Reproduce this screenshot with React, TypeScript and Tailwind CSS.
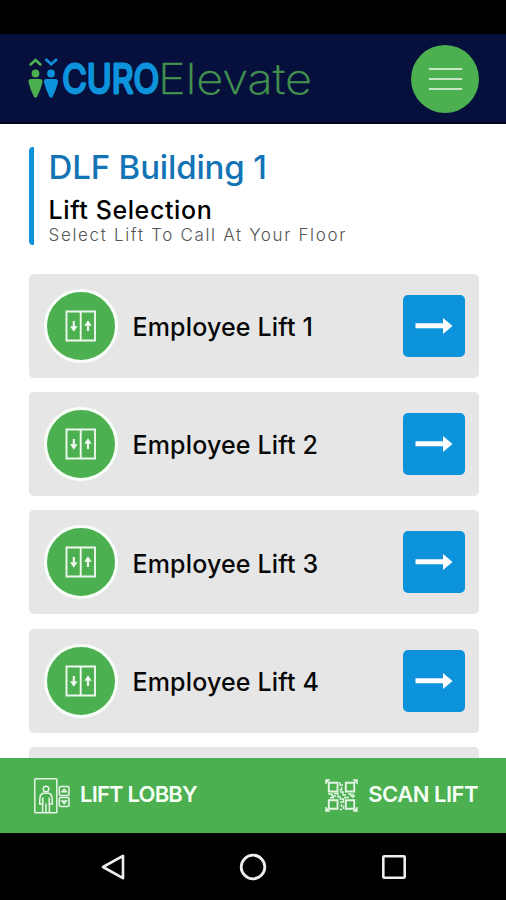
const lifts = [1, 2, 3, 4];

const Logo = () => {
  return (
    <svg width="288" height="60" viewBox="26 50 288 60" fill="none" aria-label="CURO Elevate">
      <path d="M29.8 66.3 35.5 61 41.2 66.3" stroke="#4caf50" strokeWidth="2.6" />
      <path d="M45.5 60 51.2 65.2 57 60" stroke="#0d93db" strokeWidth="2.6" />
      <circle cx="35.5" cy="74.5" r="3.9" fill="#4caf50" />
      <circle cx="51" cy="74.5" r="3.9" fill="#0d93db" />
      <path d="M31 80H40Q43 80 42.4 83.5 41 90 37.2 97.5 35.5 100 33.8 97.5 30 90 28.6 83.5 28 80 31 80Z" fill="#4caf50" />
      <path d="M46.5 80H55.5Q58.5 80 57.9 83.5 56.5 90 52.7 97.5 51 100 49.3 97.5 45.5 90 44.1 83.5 43.5 80 46.5 80Z" fill="#0d93db" />
      <text
        transform="translate(62.3 94.3) scale(0.84 1)"
        fill="#0d93db"
        stroke="#0d93db"
        strokeWidth="2.8"
        strokeLinejoin="round"
        className="font-['Inter',sans-serif] text-[40px] font-normal"
      >
        CURO
      </text>
      <text
        x="158"
        y="95.3"
        textLength="154"
        lengthAdjust="spacingAndGlyphs"
        fill="#43924f"
        stroke="#43924f"
        strokeWidth="0.4"
        className="font-['Inter',sans-serif] text-[42px] font-extralight"
      >
        Elevate
      </text>
    </svg>
  );
};

const LiftIcon = () => {
  return (
    <svg width="32" height="32" viewBox="0 0 32 32" fill="none" stroke="#fff" className="opacity-90">
      <path d="M1.5 1.5H30V30.5H1.5ZM15.7 1.5V30.5" strokeWidth="1.9" />
      <path d="M8.8 11V19M23 21V14" strokeWidth="2.2" />
      <path d="M5 16.3H12.6L8.8 21.7ZM19.2 15.7H26.8L23 10.3Z" fill="#fff" stroke="none" />
    </svg>
  );
};

const LobbyIcon = () => {
  return (
    <svg width="36" height="36" viewBox="0 0 36 36" fill="none" stroke="#e4f5e5" strokeWidth="1.5">
      <rect x="0.8" y="0.8" width="22" height="34" rx="0.8" />
      <circle cx="12" cy="11" r="2.8" />
      <path d="M9.3 15.3H14.7Q17.6 16 18 19.5L18.4 26H15.4V34.5M9.3 15.3Q6.4 16 6 19.5L5.6 26H8.6V34.5M8.8 19.5V27M15.2 19.5V27M12 25.5V34.5" />
      <rect x="25.3" y="8.5" width="9.7" height="9" rx="1.3" />
      <rect x="25.3" y="19.5" width="9.7" height="9" rx="1.3" />
      <path d="M28 13.8 30.2 11.3 32.4 13.8ZM28 23H32.4L30.2 25.6Z" />
    </svg>
  );
};

const ScanIcon = () => {
  return (
    <svg width="33" height="33" viewBox="0 0 33 33" fill="none" stroke="#e4f5e5" strokeWidth="1.5">
      <path d="M1 5V1H5M28 1H32V5M32 28V32H28M5 32H1V28M1 1 3.5 3.5M32 1 29.5 3.5M32 32 29.5 29.5M1 32 3.5 29.5" />
      <path d="M3.8 3.8H12.5V12.5H3.8ZM20.8 3.8H29.2V12.5H20.8ZM3.8 21.2H12.5V29.8H3.8ZM20.8 21.2H29.2V29.8H20.8Z" strokeWidth="1.9" />
      <path
        d="M15 3V6H18M16.5 8V11H14.5M3 15H7V17H11M9 14.5H13V18H16M15 13H18V16H21M19 18.5H24M23 15H26V17H30M28 14.5V19M5 18.8H9M14.5 20H18.5V23H15M16.5 25V28M18.5 26.5V30M14.8 30.5H17"
        strokeWidth="1.4"
      />
    </svg>
  );
};

const App = () => {
  return (
    <main className="flex h-[900px] w-[506px] flex-col overflow-hidden bg-white font-['Inter',sans-serif]">
      <div className="h-[34px] shrink-0 bg-black" />
      <header className="flex h-[90px] shrink-0 items-center justify-between border-b-2 border-[#030719] bg-[#070f3c] pt-0.5 pr-[27px] pl-[26px]">
        <Logo />
        <button className="flex size-[68px] flex-col items-center justify-center gap-2 rounded-full bg-[#4caf50]">
          <span className="h-0.5 w-[33px] bg-[#c5e7c6]" />
          <span className="h-0.5 w-[33px] bg-[#c5e7c6]" />
          <span className="h-0.5 w-[33px] bg-[#c5e7c6]" />
        </button>
      </header>

      <section className="min-h-0 flex-1 overflow-hidden pt-[23px] pr-[27.5px] pl-[28.5px]">
        <div className="flex h-[98px]">
          <div className="w-[5.5px] rounded-l-[4px] bg-[#0d93db]" />
          <div className="pl-[14.5px] whitespace-nowrap">
            <h1 className="text-[33px] leading-10 font-medium tracking-[-0.15px] text-[#1273b5]">DLF Building 1</h1>
            <h2 className="mt-[4px] text-[25px] leading-[38px] font-medium tracking-[0.6px] text-black">Lift Selection</h2>
            <p className="-mt-[4px] text-[17px] leading-5 font-light tracking-[1.66px] text-[#555]">
              Select Lift To Call At Your Floor
            </p>
          </div>
        </div>

        <ul className="mt-[29px] flex flex-col gap-[14.2px]">
          {lifts.map((lift) => (
            <li key={lift} className="flex h-[104px] items-center rounded-[5px] bg-[#e6e6e6] pr-3.5 pl-[15px]">
              <div className="flex size-[74px] items-center justify-center rounded-full border-[3px] border-[#f8fff8] bg-[#4caf50]">
                <LiftIcon />
              </div>
              <p className="ml-[15px] pt-[4px] text-[25px] font-medium tracking-[0.15px] whitespace-nowrap text-[#080808]">
                Employee Lift {lift}
              </p>
              <button className="ml-auto flex size-[62px] items-center justify-center rounded-[5px] bg-[#0d93db]">
                <svg width="38" height="18" viewBox="0 0 38 18" fill="#fff">
                  <path d="M.5 6.2H28V1L37.5 9 28 17V11.3H.5Z" />
                </svg>
              </button>
            </li>
          ))}
          <li className="h-[104px] rounded-[5px] bg-[#e6e6e6]" />
        </ul>
      </section>

      <footer className="flex h-[75px] shrink-0 items-center justify-between bg-[#4caf50] pr-7 pl-[34px] text-[22px] font-semibold text-[#f5fff5]">
        <button className="flex items-center gap-[10px] whitespace-nowrap">
          <LobbyIcon />
          <span className="pb-[3px] tracking-[-0.8px]">LIFT LOBBY</span>
        </button>
        <button className="flex items-center gap-[10px] whitespace-nowrap">
          <ScanIcon />
          <span className="pb-[3px] tracking-[-0.5px]">SCAN LIFT</span>
        </button>
      </footer>

      <nav className="flex h-[67px] shrink-0 items-center bg-black pl-[100px]">
        <svg width="26" height="28" viewBox="0 0 26 28" fill="none" stroke="#eee" strokeWidth="2.6">
          <path d="M3 14 23 2.8V25.2Z" strokeLinejoin="round" />
        </svg>
        <svg width="28" height="28" viewBox="0 0 28 28" fill="none" stroke="#eee" strokeWidth="2.8" className="ml-[113px]">
          <circle cx="14" cy="14" r="11.8" />
        </svg>
        <svg width="26" height="26" viewBox="0 0 26 26" fill="none" stroke="#eee" strokeWidth="2.6" className="ml-[114px]">
          <rect x="2.3" y="2.3" width="21.4" height="21.4" rx="1" />
        </svg>
      </nav>
    </main>
  );
};

export default App;
